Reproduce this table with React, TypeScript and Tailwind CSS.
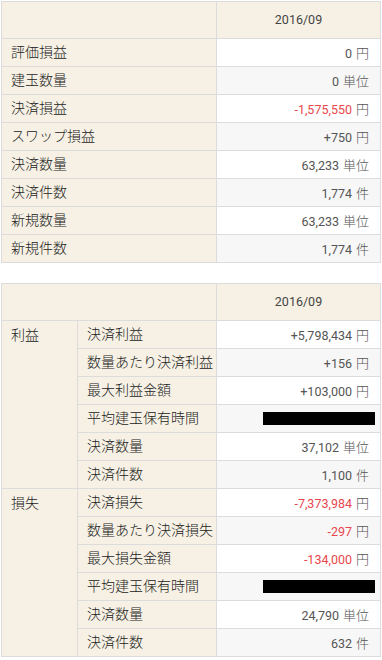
const font = "font-['Roboto','Noto_Sans_CJK_JP',sans-serif]";

type Row = { label: string; value: string; unit: string; red?: boolean; hidden?: boolean };

const summary: Row[] = [
  { label: "評価損益", value: "0", unit: "円" },
  { label: "建玉数量", value: "0", unit: "単位" },
  { label: "決済損益", value: "-1,575,550", unit: "円", red: true },
  { label: "スワップ損益", value: "+750", unit: "円" },
  { label: "決済数量", value: "63,233", unit: "単位" },
  { label: "決済件数", value: "1,774", unit: "件" },
  { label: "新規数量", value: "63,233", unit: "単位" },
  { label: "新規件数", value: "1,774", unit: "件" },
];

const profit: Row[] = [
  { label: "決済利益", value: "+5,798,434", unit: "円" },
  { label: "数量あたり決済利益", value: "+156", unit: "円" },
  { label: "最大利益金額", value: "+103,000", unit: "円" },
  { label: "平均建玉保有時間", value: "", unit: "", hidden: true },
  { label: "決済数量", value: "37,102", unit: "単位" },
  { label: "決済件数", value: "1,100", unit: "件" },
];

const loss: Row[] = [
  { label: "決済損失", value: "-7,373,984", unit: "円", red: true },
  { label: "数量あたり決済損失", value: "-297", unit: "円", red: true },
  { label: "最大損失金額", value: "-134,000", unit: "円", red: true },
  { label: "平均建玉保有時間", value: "", unit: "", hidden: true },
  { label: "決済数量", value: "24,790", unit: "単位" },
  { label: "決済件数", value: "632", unit: "件" },
];

function Value({ row }: { row: Row }) {
  // 非公開の値は黒塗り
  if (row.hidden) {
    return (
      <div className="-mr-[6px] flex justify-end">
        <div className="h-[13px] w-[112px] bg-black" />
      </div>
    );
  }
  return (
    <span>
      <span className={`text-[12.5px] ${row.red ? "text-[#e9474e]" : "text-[#555]"}`}>{row.value}</span>
      <span className="ml-1 text-[13px] font-light text-[#555]">{row.unit}</span>
    </span>
  );
}

const labelCell = "h-[28px] border-b border-r border-[#dcdcdc] bg-[#f7f1e5] px-[9px] text-left text-[14px] font-light text-[#222]";
const valueCell = "h-[28px] border-b border-[#dcdcdc] pr-[11px] text-right";

export default function App() {
  let stripe = 0;
  const bg = () => (stripe++ % 2 === 0 ? "bg-white" : "bg-[#f7f7f7]");

  return (
    <div className={`bg-white pl-px pt-px ${font}`}>
      <table className="w-[380px] table-fixed border-collapse border border-[#dcdcdc]">
        <colgroup>
          <col className="w-[215px]" />
          <col />
        </colgroup>
        <thead>
          <tr>
            <th className="h-[37px] border-b border-r border-[#dcdcdc] bg-[#f7f1e5]" />
            <th className="h-[37px] border-b border-[#dcdcdc] bg-[#f7f1e5] text-center text-[12.5px] font-normal text-[#444]">
              2016/09
            </th>
          </tr>
        </thead>
        <tbody>
          {summary.map((r, i) => (
            <tr key={r.label + i}>
              <th className={labelCell}>{r.label}</th>
              <td className={`${valueCell} ${i % 2 === 0 ? "bg-white" : "bg-[#f7f7f7]"}`}>
                <Value row={r} />
              </td>
            </tr>
          ))}
        </tbody>
      </table>

      <table className="mt-[20px] w-[380px] table-fixed border-collapse border border-[#dcdcdc]">
        <colgroup>
          <col className="w-[76px]" />
          <col className="w-[139px]" />
          <col />
        </colgroup>
        <thead>
          <tr>
            <th colSpan={2} className="h-[37px] border-b border-r border-[#dcdcdc] bg-[#f7f1e5]" />
            <th className="h-[37px] border-b border-[#dcdcdc] bg-[#f7f1e5] text-center text-[12.5px] font-normal text-[#444]">
              2016/09
            </th>
          </tr>
        </thead>
        <tbody>
          {[
            { group: "利益", rows: profit },
            { group: "損失", rows: loss },
          ].map((g) =>
            g.rows.map((r, i) => (
              <tr key={g.group + r.label + i}>
                {i === 0 && (
                  <th
                    rowSpan={g.rows.length}
                    className="border-b border-r border-[#dcdcdc] bg-[#f7f1e5] px-[9px] pt-[4px] text-left align-top text-[14px] font-light text-[#222]"
                  >
                    {g.group}
                  </th>
                )}
                <th className={`${labelCell} overflow-hidden whitespace-nowrap`}>{r.label}</th>
                <td className={`${valueCell} ${bg()}`}>
                  <Value row={r} />
                </td>
              </tr>
            ))
          )}
        </tbody>
      </table>
    </div>
  );
}
